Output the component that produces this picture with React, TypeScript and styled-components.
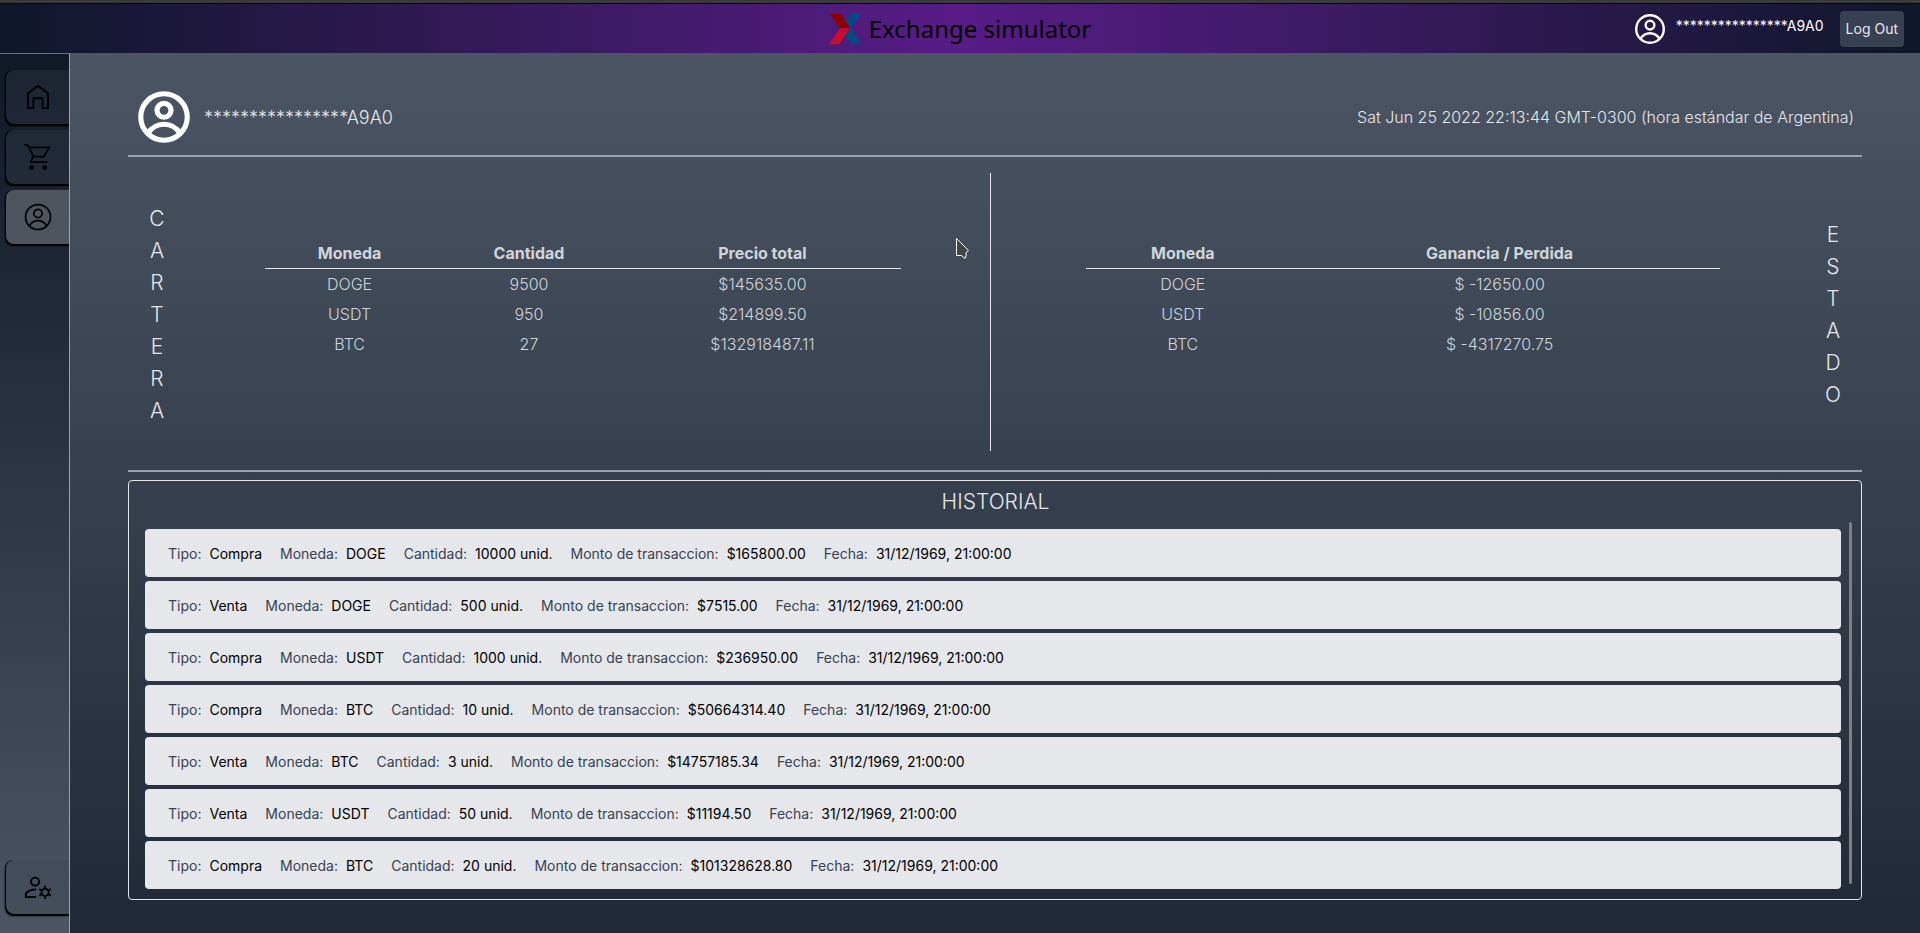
import React from "react";
import styled, { createGlobalStyle } from "styled-components";

const GlobalStyle = createGlobalStyle`
  *, *::before, *::after { box-sizing: border-box; }
  body { margin: 0; font-family: Inter, "Noto Sans", sans-serif; font-size: 16px; color: #e5e7eb; }
`;

const Page = styled.div`
  display: flex;
  flex-direction: column;
  min-height: 100vh;
  background: #111827;
`;

const TopBar = styled.header`
  display: grid;
  grid-template-columns: 1fr auto 1fr;
  align-items: center;
  height: 53px;
  padding: 0 16px;
  border-top: 3px solid #3a3a3a;
  box-shadow: inset 0 1px 0 #05050a;
  background: linear-gradient(to right, #0f172a, #581c87, #0f172a);
`;

const Brand = styled.h1`
  grid-column: 2;
  display: flex;
  align-items: center;
  gap: 8px;
  margin: 0;
  padding-top: 2px;
  font: 400 24px/32px "Noto Sans", sans-serif;
  color: #000;
`;

const Account = styled.div`
  display: flex;
  align-items: center;
  justify-content: flex-end;
  gap: 8px;
  padding-top: 2px;
  color: #fff;
`;

const AccountName = styled.span`
  padding-bottom: 6px;
  margin-right: 8px;
  font-size: 14px;
  line-height: 20px;
`;

const LogOutButton = styled.button`
  height: 36px;
  padding: 0 6px;
  border: 0;
  border-radius: 4px;
  background: #374151;
  color: #e5e7eb;
  font: 400 14px/20px Inter, sans-serif;
`;

const Body = styled.div`
  display: flex;
  flex: 1;
`;

const Sidebar = styled.nav`
  display: flex;
  flex-direction: column;
  flex: none;
  gap: 6px;
  width: 70px;
  padding: 16px 0 19px 6px;
  border-top: 1px solid #6b7280;
  border-right: 1px solid #9ca3af;
  background: linear-gradient(to bottom, #111827, #4b5563);
`;

const Tab = styled.button<{ $active?: boolean; $last?: boolean }>`
  display: flex;
  align-items: center;
  justify-content: center;
  height: 54px;
  margin-top: ${(p) => (p.$last ? "auto" : "0")};
  padding: 0;
  border: 0;
  border-radius: 8px 0 0 8px;
  background: ${(p) => (p.$active ? "#50545f" : "rgba(55, 65, 81, 0.3)")};
  box-shadow: -1px 2px 2px #000, 0 2px 0 #000, -1px 0 0 #000;
  clip-path: inset(-4px 0 -6px -6px);
  color: #000;
`;

const Main = styled.main`
  flex: 1;
  min-width: 0;
  padding: 26px 58px 32px;
  background: linear-gradient(to bottom, #4b5563, #1f2937);
`;

const ProfileRow = styled.section`
  display: flex;
  align-items: center;
  justify-content: space-between;
  height: 78px;
  padding: 0 8px 0 5px;
  border-bottom: 2px solid #9ca3af;
`;

const Profile = styled.div`
  display: flex;
  align-items: center;
  gap: 9px;
  color: #fff;
`;

const ProfileName = styled.span`
  font-size: 18px;
  font-weight: 300;
  color: #e5e7eb;
`;

const DateText = styled.time`
  font-weight: 300;
`;

const Summary = styled.section`
  display: grid;
  grid-template-columns: 58px 804fr 1px 813fr 58px;
  align-items: center;
  padding: 16px 0 19px;
  border-bottom: 2px solid #9ca3af;
`;

const VerticalTitle = styled.h2`
  display: flex;
  flex-direction: column;
  align-items: center;
  margin: 0;
  padding-top: 5px;
  font-size: 21px;
  font-weight: 300;
  line-height: 32px;
`;

const Divider = styled.div`
  height: 278px;
  background: #e5e7eb;
`;

const TableArea = styled.div<{ $side: "left" | "right" }>`
  display: flex;
  justify-content: center;
  min-height: 148px;
  padding: ${(p) => (p.$side === "left" ? "0 10px 0 0" : "0 0 0 11px")};
`;

const Table = styled.table<{ $width: number; $first: number; $second: number }>`
  align-self: flex-start;
  width: ${(p) => p.$width}%;
  border-collapse: collapse;
  table-layout: fixed;
  text-align: center;
  line-height: 30px;
  color: #d1d5db;
  th, td { padding: 0; }
  th { font-weight: 700; border-bottom: 1px solid #e5e7eb; }
  th:first-child { width: ${(p) => p.$first}%; }
  th:nth-child(2) { width: ${(p) => p.$second}%; }
  td { font-weight: 300; }
`;

const History = styled.section`
  margin-top: 8px;
  padding: 0 9px 10px 16px;
  border: 1px solid #e5e7eb;
  border-radius: 4px;
`;

const HistoryTitle = styled.h2`
  margin: 0;
  padding-right: 6px;
  text-align: center;
  font-size: 21px;
  font-weight: 300;
  line-height: 41px;
`;

const HistoryBody = styled.div`
  display: flex;
  gap: 8px;
`;

const HistoryList = styled.ul`
  display: flex;
  flex: 1;
  flex-direction: column;
  gap: 4px;
  margin: 0;
  padding: 7px 0 0;
  list-style: none;
`;

const ScrollThumb = styled.div`
  width: 3px;
  margin-bottom: 5px;
  border-radius: 2px;
  background: #808080;
`;

const HistoryItem = styled.li`
  display: flex;
  align-items: center;
  gap: 18px;
  height: 48px;
  padding: 2px 23px 0;
  border-radius: 4px;
  background: #e5e7eb;
  font-size: 14px;
  line-height: 20px;
  white-space: nowrap;
`;

const Field = styled.span`
  display: flex;
  gap: 8px;
  color: #000;
`;

const FieldLabel = styled.span`
  color: #374151;
`;

const Pointer = styled.svg`
  position: absolute;
  left: 955px;
  top: 237px;
`;

const Logo = () => (
  <svg width="32" height="32" viewBox="87 39 98 96" aria-hidden="true">
    <path d="M154 40h30l-30 45-15-23zM154 84l31 50h-31l-17-27z" fill="#004b87" />
    <path d="M90 40h32l29 45h-31z" fill="#8f0000" />
    <path d="M120 85h31l-33 49H87z" fill="#cb0c2f" />
  </svg>
);

const UserIcon = ({ size, stroke }: { size: number; stroke: number }) => (
  <svg width={size} height={size} viewBox="0 0 24 24" fill="none" stroke="currentColor" strokeWidth={stroke} aria-hidden="true">
    <circle cx="12" cy="12" r={10 - stroke / 2} />
    <circle cx="12" cy="9.4" r={3.7 - stroke / 2} />
    <path d="M5.6 18.5C7.2 16 9.5 14.8 12 14.8s4.8 1.2 6.4 3.7" />
  </svg>
);

const HomeIcon = () => (
  <svg width="32" height="32" viewBox="0 0 24 24" fill="none" stroke="currentColor" strokeWidth="1.4" aria-hidden="true">
    <path d="M4.5 20.3V9.2L12 3.7l7.5 5.5v11.1h-4.1v-7.4H8.6v7.4z" />
  </svg>
);

const CartIcon = () => (
  <svg width="32" height="32" viewBox="0 -0.7 24 24" fill="none" stroke="currentColor" strokeWidth="1.3" aria-hidden="true">
    <path d="M1.5 2.3h2.7l4.4 8.7h7.8l4-6.900H5.2M8.6 11l-1.9 3.2q-.5 1 .6 1H19" />
    <circle cx="7.2" cy="19.3" r="1.8" fill="currentColor" stroke="none" />
    <circle cx="17" cy="19.3" r="1.8" fill="currentColor" stroke="none" />
  </svg>
);

const ManageIcon = () => (
  <svg width="32" height="32" viewBox="0 0 24 24" fill="none" stroke="currentColor" strokeWidth="1.4" aria-hidden="true">
    <circle cx="9.8" cy="8" r="3" />
    <path d="M10.6 19.5H2.9v-1.7c0-2.6 4-3.9 7.7-3.9" />
    <circle cx="17.3" cy="16" r="2.7" />
    {[0, 60, 120, 180, 240, 300].map((a) => (
      <path key={a} d="M17.3 13v-2" transform={`rotate(${a} 17.3 16)`} />
    ))}
  </svg>
);

const wallet = [
  ["DOGE", "9500", "$145635.00"],
  ["USDT", "950", "$214899.50"],
  ["BTC", "27", "$132918487.11"],
];

const status = [
  ["DOGE", "$ -12650.00"],
  ["USDT", "$ -10856.00"],
  ["BTC", "$ -4317270.75"],
];

const transactions = [
  ["Compra", "DOGE", "10000", "$165800.00"],
  ["Venta", "DOGE", "500", "$7515.00"],
  ["Compra", "USDT", "1000", "$236950.00"],
  ["Compra", "BTC", "10", "$50664314.40"],
  ["Venta", "BTC", "3", "$14757185.34"],
  ["Venta", "USDT", "50", "$11194.50"],
  ["Compra", "BTC", "20", "$101328628.80"],
];

const Letters = ({ text }: { text: string }) => (
  <VerticalTitle aria-label={text}>
    {text.split("").map((letter, i) => (
      <span key={i}>{letter}</span>
    ))}
  </VerticalTitle>
);

interface DataTableProps {
  head: string[];
  rows: string[][];
  width: number;
  first: number;
  second: number;
}

const DataTable = ({ head, rows, width, first, second }: DataTableProps) => (
  <Table $width={width} $first={first} $second={second}>
    <thead>
      <tr>{head.map((h) => <th key={h} scope="col">{h}</th>)}</tr>
    </thead>
    <tbody>
      {rows.map((row) => (
        <tr key={row[0]}>{row.map((cell) => <td key={cell}>{cell}</td>)}</tr>
      ))}
    </tbody>
  </Table>
);

export default function App() {
  return (
    <Page>
      <GlobalStyle />
      <TopBar>
        <Brand><Logo />Exchange simulator</Brand>
        <Account>
          <UserIcon size={36} stroke={1.6} />
          <AccountName>****************A9A0</AccountName>
          <LogOutButton type="button">Log Out</LogOutButton>
        </Account>
      </TopBar>
      <Body>
        <Sidebar>
          <Tab type="button" aria-label="Inicio"><HomeIcon /></Tab>
          <Tab type="button" aria-label="Mercado"><CartIcon /></Tab>
          <Tab type="button" aria-label="Perfil" $active><UserIcon size={32} stroke={1.3} /></Tab>
          <Tab type="button" aria-label="Cuenta" $last><ManageIcon /></Tab>
        </Sidebar>
        <Main>
          <ProfileRow>
            <Profile>
              <UserIcon size={62} stroke={2} />
              <ProfileName>****************A9A0</ProfileName>
            </Profile>
            <DateText>Sat Jun 25 2022 22:13:44 GMT-0300 (hora estándar de Argentina)</DateText>
          </ProfileRow>
          <Summary>
            <Letters text="CARTERA" />
            <TableArea $side="left">
              <DataTable head={["Moneda", "Cantidad", "Precio total"]} rows={wallet} width={80} first={26.5} second={30} />
            </TableArea>
            <Divider />
            <TableArea $side="right">
              <DataTable head={["Moneda", "Ganancia / Perdida"]} rows={status} width={79} first={30.5} second={69.5} />
            </TableArea>
            <Letters text="ESTADO" />
          </Summary>
          <History>
            <HistoryTitle>HISTORIAL</HistoryTitle>
            <HistoryBody>
              <HistoryList>
                {transactions.map(([type, coin, amount, total]) => (
                  <HistoryItem key={total}>
                    <Field><FieldLabel>Tipo:</FieldLabel>{type}</Field>
                    <Field><FieldLabel>Moneda:</FieldLabel>{coin}</Field>
                    <Field><FieldLabel>Cantidad:</FieldLabel>{amount} unid.</Field>
                    <Field><FieldLabel>Monto de transaccion:</FieldLabel>{total}</Field>
                    <Field><FieldLabel>Fecha:</FieldLabel>31/12/1969, 21:00:00</Field>
                  </HistoryItem>
                ))}
              </HistoryList>
              <ScrollThumb />
            </HistoryBody>
          </History>
        </Main>
      </Body>
      <Pointer width="16" height="24" viewBox="0 0 16 24" aria-hidden="true">
        <path d="M1.5 1.5v17h5l3.5 3 1.5-4.5-1-1 3-2.500z" fill="#444" stroke="#fff" />
      </Pointer>
    </Page>
  );
}
